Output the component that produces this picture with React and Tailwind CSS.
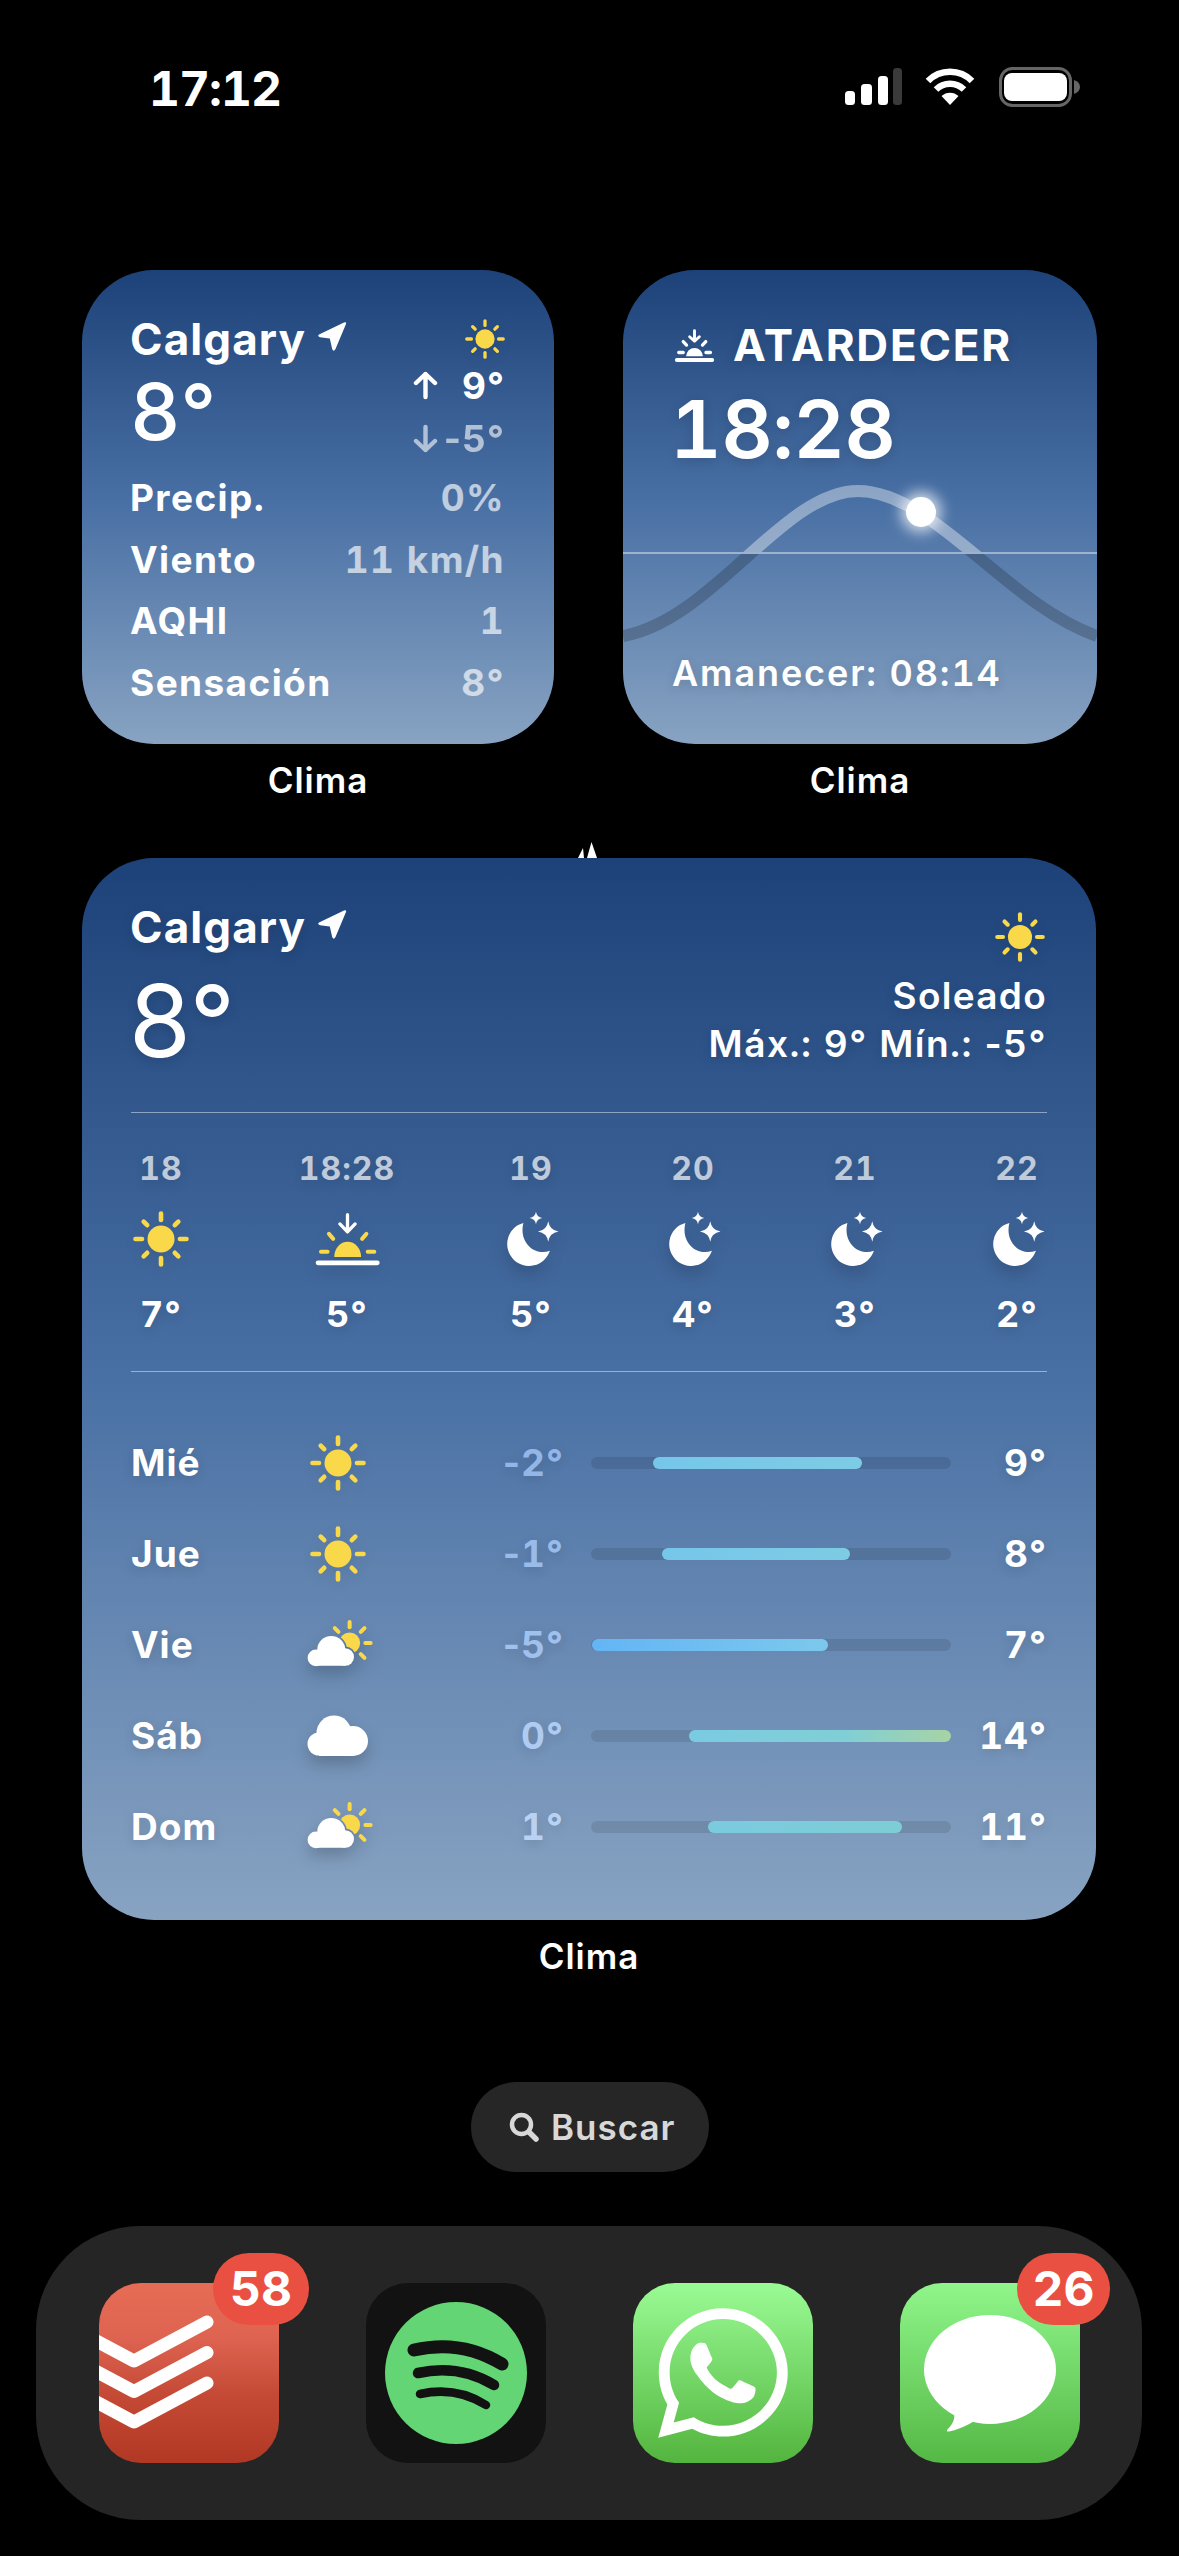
import React from "react";
import { FaWhatsapp } from "react-icons/fa";

const SHADOW = "[text-shadow:0_3px_12px_rgba(0,0,0,0.14)]";

function Sun({ size = 56 }) {
  const rays = [0, 45, 90, 135, 180, 225, 270, 315];
  return (
    <svg width={size} height={size} viewBox="0 0 56 56" className="drop-shadow-[0_4px_6px_rgba(0,0,0,0.08)]">
      <circle cx="28" cy="28" r="13.500" fill="#f9d84a" />
      {rays.map((a) => (
        <line key={a} x1="28" y1={a % 90 === 0 ? "9" : "8.500"} x2="28" y2={a % 90 === 0 ? "2.500" : "3.500"} transform={`rotate(${a} 28 28)`} stroke="#f9d84a" strokeWidth="4.600" strokeLinecap="round" />
      ))}
    </svg>
  );
}

function NavArrow() {
  return (
    <svg width="30" height="31" viewBox="0 0 30 31" className="ml-[11px] mt-[7px] shrink-0">
      <path d="M2 13.500 L27 1.500 Q29.800 .6 29 3 L18.500 28 Q16.500 31.500 15.200 28 L12.800 17.600 L3 16.200 Q0 15.400 2 13.500Z" fill="#fff" />
    </svg>
  );
}

function SunsetSmall() {
  return (
    <svg width="45" height="34" viewBox="100 180 206 175" fill="none" stroke="#fff" strokeLinecap="round">
      <path d="M203 194V245M178 225L203 248L228 225" strokeWidth="15" strokeLinejoin="round" />
      <path d="M145 250L162 268M261 250L244 268M122 306H145M262 306H285" strokeWidth="17" />
      <path d="M160 326A43 43 0 0 1 246 326Z" fill="#fff" stroke="none" />
      <path d="M112 345H294" strokeWidth="20" />
    </svg>
  );
}

function Sunset() {
  return (
    <svg width="69" height="58" viewBox="100 180 206 175" fill="none" strokeLinecap="round" className="drop-shadow-[0_6px_8px_rgba(0,0,0,0.14)]">
      <path d="M203 194V245M180 222L203 246L226 222" stroke="#fff" strokeWidth="10" strokeLinejoin="round" />
      <path d="M147 252L160 267M260 252L247 267M123 306H143M264 306H284" stroke="#f9d84a" strokeWidth="12" />
      <path d="M163 322A40.500 46 0 0 1 244 322Z" fill="#f9d84a" />
      <path d="M114 339.500H293" stroke="#fff" strokeWidth="14" />
    </svg>
  );
}

function star(x, y, r) {
  const k = r * 0.13;
  return `M${x} ${y - r}Q${x + k} ${y - k} ${x + r} ${y}Q${x + k} ${y + k} ${x} ${y + r}Q${x - k} ${y + k} ${x - r} ${y}Q${x - k} ${y - k} ${x} ${y - r}Z`;
}

function Moon() {
  return (
    <svg width="55" height="58" viewBox="675 180 165 175" className="drop-shadow-[0_8px_8px_rgba(0,0,0,0.16)]">
      <path d="M733 219A66 66 0 1 0 813 303C770 320 718 280 733 219Z" fill="#fff" />
      <path d={star(808, 245, 31)} fill="#fff" />
      <path d={star(771, 204, 19)} fill="#fff" />
    </svg>
  );
}

function CloudShape(props) {
  return (
    <g {...props}>
      <circle cx="30" cy="38" r="16" />
      <circle cx="46" cy="46" r="10" />
      <circle cx="12.500" cy="47" r="9.500" />
      <rect x="13" y="44" width="33" height="12" />
    </g>
  );
}

function CloudSun() {
  const rays = [0, 45, 90, 135, -45];
  return (
    <svg width="80" height="60" viewBox="0 0 80 60" className="ml-[4px] mt-[-4px] drop-shadow-[0_8px_8px_rgba(0,0,0,0.2)]">
      <mask id="cloudgap">
        <rect width="80" height="60" fill="#fff" />
        <CloudShape fill="#000" stroke="#000" strokeWidth="4" />
      </mask>
      <g mask="url(#cloudgap)">
        <circle cx="51" cy="30" r="12" fill="#f9d84a" />
        {rays.map((a) => (
          <line key={a} x1="51" y1="12" x2="51" y2="6" transform={`rotate(${a} 51 30)`} stroke="#f9d84a" strokeWidth="4.600" strokeLinecap="round" />
        ))}
      </g>
      <CloudShape fill="#fff" />
    </svg>
  );
}

function Cloud() {
  return (
    <svg width="62" height="42" viewBox="0 0 62 42" className="drop-shadow-[0_8px_8px_rgba(0,0,0,0.2)]">
      <g fill="#fff">
        <circle cx="27" cy="18" r="17.500" />
        <circle cx="46" cy="26" r="15" />
        <circle cx="12" cy="29" r="11.500" />
        <rect x="12" y="24" width="34" height="17" />
      </g>
    </svg>
  );
}

function Arrow({ down, className }) {
  return (
    <svg width="25" height="29" viewBox="0 0 25 29" fill="none" stroke="#fff" strokeWidth="4.400" strokeLinecap="round" strokeLinejoin="round" className={className}>
      {down ? <path d="M12.500 3V26M3 17L12.500 26L22 17" /> : <path d="M12.500 26V3M3 12L12.500 3L22 12" />}
    </svg>
  );
}

// the minus sign keeps its own narrow width while the digits stay tabular
function Temp({ v }) {
  if (!v.startsWith("-")) return v;
  return (
    <>
      <span className="normal-nums">-</span>
      {v.slice(1)}
    </>
  );
}

const card = "rounded-[72px] bg-[linear-gradient(180deg,#1d4279_0%,#4a71a5_50%,#88a3c2_100%)] text-white overflow-hidden";
const rows = [
  ["Precip.", "0%"],
  ["Viento", "11 km/h"],
  ["AQHI", "1"],
  ["Sensación", "8°"],
];

function Label({ children }) {
  return <div className="mt-4 h-10 text-center text-[35px] leading-10 font-semibold tracking-[1px] text-white">{children}</div>;
}

function SmallWeather() {
  return (
    <div className="w-[472px]">
      <div className={`${card} h-[474px] pl-[48px] pr-[49px] pt-[44px]`}>
        <div className="flex justify-between items-start">
          <div>
            <div className="flex items-start text-[44px] leading-[50px] font-bold tracking-[1.1px]">Calgary<NavArrow /></div>
            <div className="mt-2 text-[78px] leading-[80px] font-medium tracking-normal">8°</div>
          </div>
          <div className="flex flex-col items-end">
            <div className="mt-[5px] mb-0"><Sun size={40} /></div>
            <div className="flex w-[92px] items-center justify-between text-[37px] leading-[53px] font-bold"><Arrow /><span>9°</span></div>
            <div className="flex w-[92px] items-center justify-between text-[37px] leading-[53px] font-bold opacity-60"><Arrow down /><span><Temp v="-5°" /></span></div>
          </div>
        </div>
        <div className="mt-[2px] flex flex-col">
          {rows.map(([a, b]) => (
            <div key={a} className="flex h-[61.5px] justify-between text-[37px] leading-[61.5px] font-bold tracking-[1.4px]">
              <span>{a}</span>
              <span className="text-white/65">{b}</span>
            </div>
          ))}
        </div>
      </div>
      <Label>Clima</Label>
    </div>
  );
}

function Sunrise() {
  return (
    <div className="w-[474px]">
      <div className={`${card} relative flex h-[474px] flex-col pl-[49px] pr-[50px] pt-[50px] pb-[49px]`}>
        <svg width="474" height="474" viewBox="0 0 474 474" fill="none" className="absolute left-0 top-0">
          <defs>
            <clipPath id="above"><rect x="0" y="0" width="474" height="282" /></clipPath>
            <clipPath id="below"><rect x="0" y="284" width="474" height="190" /></clipPath>
            <filter id="glow" x="-100%" y="-100%" width="300%" height="300%"><feGaussianBlur stdDeviation="7" /></filter>
          </defs>
          <path d="M0 366C90 350 160 221 235 221C310 221 384 335 474 366" stroke="#fff" strokeOpacity="0.38" strokeWidth="12" clipPath="url(#above)" />
          <path d="M0 366C90 350 160 221 235 221C310 221 384 335 474 366" stroke="#000" strokeOpacity="0.2" strokeWidth="12" clipPath="url(#below)" />
          <rect x="0" y="282" width="474" height="2" fill="#fff" fillOpacity="0.42" />
          <circle cx="298" cy="242" r="20" fill="#fff" fillOpacity="0.75" filter="url(#glow)" />
          <circle cx="298" cy="242" r="15" fill="#fff" />
        </svg>
        <div className={`relative flex items-center text-[44px] leading-[50px] font-bold tracking-[1.8px] ${SHADOW}`}>
          <SunsetSmall />
          <span className="ml-[16px]">ATARDECER</span>
        </div>
        <div className={`relative ml-[-2px] mt-[17px] text-[80px] leading-[84px] font-semibold tracking-[-0.6px] ${SHADOW}`}>18:28</div>
        <div className={`relative mt-auto text-[36px] leading-[44px] font-semibold tracking-[1.9px] ${SHADOW}`}>Amanecer: 08:14</div>
      </div>
      <Label>Clima</Label>
    </div>
  );
}

const hours = [
  { h: "18", w: "w-[60px]", icon: <Sun size={56} />, t: "7°" },
  { h: "18:28", w: "w-[100px]", icon: <Sunset />, t: "5°" },
  { h: "19", w: "w-[56px]", icon: <Moon />, t: "5°" },
  { h: "20", w: "w-[56px]", icon: <Moon />, t: "4°" },
  { h: "21", w: "w-[56px]", icon: <Moon />, t: "3°" },
  { h: "22", w: "w-[56px]", icon: <Moon />, t: "2°" },
];

const days = [
  { d: "Mié", icon: <Sun size={56} />, lo: "-2°", hi: "9°", ml: "ml-[62px]", w: "w-[209px]", bar: "bg-[linear-gradient(90deg,#76c6ea,#7dcce4)]", c: "text-[#93b6e8]" },
  { d: "Jue", icon: <Sun size={56} />, lo: "-1°", hi: "8°", ml: "ml-[71px]", w: "w-[188px]", bar: "bg-[linear-gradient(90deg,#76c6ea,#7dcce4)]", c: "text-[#98bbea]" },
  { d: "Vie", icon: <CloudSun />, lo: "-5°", hi: "7°", ml: "ml-[1px]", w: "w-[236px]", bar: "bg-[linear-gradient(90deg,#63b5f5,#7cc8ec)]", c: "text-[#a0c0ee]" },
  { d: "Sáb", icon: <Cloud />, lo: "0°", hi: "14°", ml: "ml-[98px]", w: "w-[262px]", bar: "bg-[linear-gradient(90deg,#7acbe2,#80cfd5_60%,#a8d3a4)]", c: "text-[#afcbf2]" },
  { d: "Dom", icon: <CloudSun />, lo: "1°", hi: "11°", ml: "ml-[117px]", w: "w-[194px]", bar: "bg-[linear-gradient(90deg,#7acbdf,#7dcdd6)]", c: "text-[#b9d2f4]" },
];

function BigWeather() {
  return (
    <div className="relative mt-[58px] w-[1014px]">
      <svg width="26" height="16" viewBox="0 0 26 16" className="absolute left-[496px] top-[-16px]">
        <path d="M0 16L5 6L6 16ZM9 16L13.500 0L19 16Z" fill="#fff" />
      </svg>
      <div className={`${card} h-[1062px] px-[49px] pt-[44px]`}>
        <div className={`flex justify-between items-start ${SHADOW}`}>
          <div>
            <div className="ml-[-1px] flex items-start text-[44px] leading-[50px] font-bold tracking-[1.1px]">Calgary<NavArrow /></div>
            <div className="ml-[-2px] mt-[19px] text-[100px] leading-[100px] font-normal tracking-normal normal-nums">8°</div>
          </div>
          <div className="flex flex-col items-end">
            <div className="mt-[10px] mr-[2px] mb-[10px]"><Sun size={50} /></div>
            <div className="text-[37px] leading-[48px] font-semibold tracking-[1.3px]">Soleado</div>
            <div className="text-[37px] leading-[47px] font-semibold tracking-[1.5px]">Máx.: 9° Mín.: <Temp v="-5°" /></div>
          </div>
        </div>
        <div className="mt-[41px] h-px bg-white/45" />
        <div className={`mt-[36px] flex gap-[106px] ${SHADOW}`}>
          {hours.map((x) => (
            <div key={x.h} className={`flex ${x.w} flex-col items-center`}>
              <div className="text-[32px] leading-10 font-bold text-white/70 whitespace-nowrap">{x.h}</div>
              <div className="mt-[21px] flex h-[58px] items-center justify-center">{x.icon}</div>
              <div className="mt-[24px] text-[36px] leading-[44px] font-bold">{x.t}</div>
            </div>
          ))}
        </div>
        <div className="mt-[35px] h-px bg-white/45" />
        <div className={`mt-[45px] flex flex-col ${SHADOW}`}>
          {days.map((x) => (
            <div key={x.d} className="flex h-[91px] items-center text-[37px] leading-[91px] font-bold">
              <div className="w-[170px]">{x.d}</div>
              <div className="flex w-[74px] justify-center">{x.icon}</div>
              <div className={`w-[189px] text-right ${x.c}`}><Temp v={x.lo} /></div>
              <div className="ml-[27px] h-3 w-[360px] rounded-full bg-black/10">
                <div className={`h-3 rounded-full ${x.ml} ${x.w} ${x.bar}`} />
              </div>
              <div className="flex-1 text-right">{x.hi}</div>
            </div>
          ))}
        </div>
      </div>
      <Label>Clima</Label>
    </div>
  );
}

function StatusBar() {
  return (
    <div className="mt-[60px] flex h-[58px] items-start justify-between pl-[149px] pr-[98px] text-white">
      <div className="text-[48px] leading-[58px] font-bold tracking-[-1px]">17:12</div>
      <div className="mt-[8px] flex items-start">
        <svg width="58" height="38" viewBox="0 0 58 38">
          <rect x="0" y="23" width="10" height="14" rx="3.500" fill="#fff" />
          <rect x="16" y="16" width="11" height="21" rx="3.500" fill="#fff" />
          <rect x="33" y="8" width="10" height="29" rx="3.500" fill="#fff" />
          <rect x="48" y="0" width="9" height="37" rx="3.500" fill="#3a3a3a" />
        </svg>
        <svg width="50" height="38" viewBox="0 0 50 38" className="ml-[22px]" fill="none" stroke="#fff" strokeWidth="6.500">
          <path d="M3 13A31 31 0 0 1 47 13" />
          <path d="M11 21.500A20 20 0 0 1 39 21.500" />
          <path d="M25 37L16.500 28A12.500 12.500 0 0 1 33.500 28Z" fill="#fff" stroke="none" />
        </svg>
        <svg width="82" height="40" viewBox="0 0 82 40" className="ml-[24px] mt-[-1px]">
          <rect x="1.500" y="1.500" width="70" height="37" rx="12" fill="none" stroke="#666" strokeWidth="3" />
          <rect x="5" y="6" width="63" height="28" rx="8" fill="#fff" />
          <path d="M75 13Q81 15 81 20Q81 25 75 27Z" fill="#666" />
        </svg>
      </div>
    </div>
  );
}

function Badge({ n, className }) {
  return (
    <div className={`absolute top-[-30px] flex h-[72px] items-center justify-center rounded-[36px] bg-[#ea5041] text-[48px] font-bold leading-none tracking-normal text-white ${className}`}>{n}</div>
  );
}

function Dock() {
  return (
    <div className="mt-[54px] ml-[36px] flex h-[294px] w-[1106px] items-center gap-[87px] rounded-[104px] bg-[#252525] pl-[63px]">
      <div className="relative h-[180px] w-[180px]">
        <div className="h-[180px] w-[180px] overflow-hidden rounded-[42px] bg-[linear-gradient(180deg,#e66c55_0%,#de6451_30%,#c54a36_62%,#b13824_100%)]">
          <svg width="180" height="180" viewBox="0 0 180 180" fill="none" stroke="#fff" strokeWidth="13" strokeLinecap="round" strokeLinejoin="round">
            <path d="M-8 55L35 78L108 39" />
            <path d="M-8 85.500L35 108.500L108 69.500" />
            <path d="M-8 116L35 139L108 100" />
          </svg>
        </div>
        <Badge n="58" className="left-[114px] w-[96px]" />
      </div>
      <div className="h-[180px] w-[180px] overflow-hidden rounded-[42px] bg-[#121212]">
        <svg width="180" height="180" viewBox="0 0 180 180" fill="none" stroke="#121212" strokeLinecap="round">
          <circle cx="90" cy="90" r="71" fill="#63d574" stroke="none" />
          <path d="M48 67Q95 56 136 81" strokeWidth="13" />
          <path d="M52 90Q93 81 128 102" strokeWidth="10.500" />
          <path d="M54 111Q90 103 120 122" strokeWidth="8.500" />
        </svg>
      </div>
      <div className="flex h-[180px] w-[180px] items-center justify-center rounded-[42px] bg-[linear-gradient(180deg,#99fb94_0%,#53b53e_100%)]">
        <FaWhatsapp size={148} color="#fff" />
      </div>
      <div className="relative h-[180px] w-[180px]">
        <div className="h-[180px] w-[180px] rounded-[42px] bg-[linear-gradient(180deg,#90f68b_0%,#54b845_100%)]">
          <svg width="180" height="180" viewBox="0 0 180 180" fill="#fff">
            <ellipse cx="90" cy="86.500" rx="66" ry="54.500" />
            <path d="M50 124Q60 134 47 147Q46 149 49 148.500Q62 146 76 137Z" />
          </svg>
        </div>
        <Badge n="26" className="left-[117px] w-[93px]" />
      </div>
    </div>
  );
}

export default function App() {
  return (
    <div className="h-[2556px] w-[1179px] overflow-hidden bg-black font-['Inter','Liberation_Sans',sans-serif] tabular-nums tracking-[1px]">
      <StatusBar />
      <div className="mt-[152px] flex flex-col items-start pl-[82px]">
        <div className="flex gap-[69px]">
          <SmallWeather />
          <Sunrise />
        </div>
        <BigWeather />
      </div>
      <div className="mt-[106px] flex justify-center">
        <div className="ml-[1px] flex h-[90px] w-[238px] items-center rounded-[45px] bg-[#262626] pl-[38px] text-[35px] font-semibold text-[#d8d8d8]">
          <svg width="30" height="30" viewBox="0 0 30 30" fill="none" stroke="#d8d8d8" strokeLinecap="round">
            <circle cx="12.500" cy="12.500" r="9.500" strokeWidth="4.500" />
            <path d="M20 20L27 27" strokeWidth="5.500" />
          </svg>
          <span className="ml-[12px]">Buscar</span>
        </div>
      </div>
      <Dock />
    </div>
  );
}
